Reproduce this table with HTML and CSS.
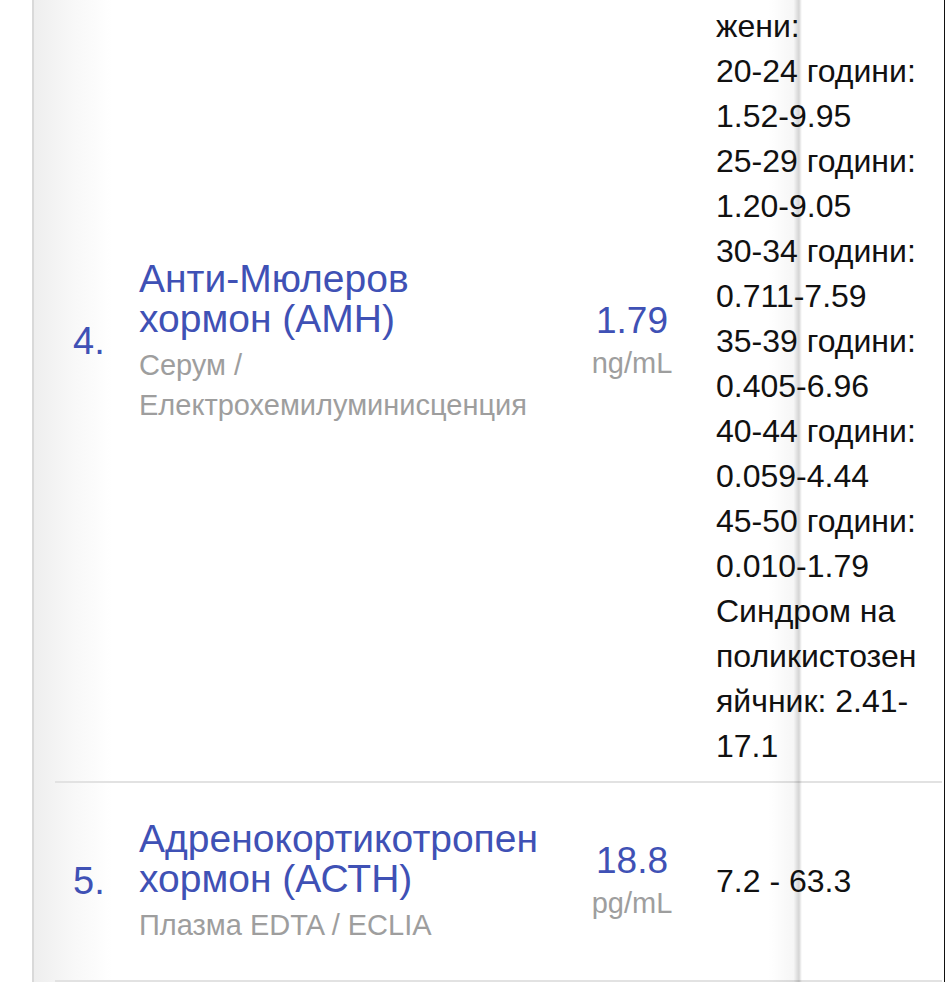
FILE: index.html
```html
<!DOCTYPE html>
<html>
<head lang="bg">
  <meta charset="UTF-8">
  <title>Резултати</title>
  <link rel="stylesheet" href="styles.css">
</head>
<body>
  <div class="page">
    <div class="panel">
      <div class="rows">
        <div class="row">
          <div class="num">4.</div>
          <div class="test">
            <div class="name">Анти-Мюлеров<br>хормон (АМН)</div>
            <div class="method">Серум / Електрохемилуминисценция</div>
          </div>
          <div class="result">
            <div class="value">1.79</div>
            <div class="unit">ng/mL</div>
          </div>
          <div class="range">
            Референтни<br>
            стойности за<br>
            жени:<br>
            20-24 години:<br>
            1.52-9.95<br>
            25-29 години:<br>
            1.20-9.05<br>
            30-34 години:<br>
            0.711-7.59<br>
            35-39 години:<br>
            0.405-6.96<br>
            40-44 години:<br>
            0.059-4.44<br>
            45-50 години:<br>
            0.010-1.79<br>
            Синдром на<br>
            поликистозен<br>
            яйчник: 2.41-<br>
            17.1
          </div>
        </div>
        <div class="row">
          <div class="num">5.</div>
          <div class="test">
            <div class="name">Адренокортикотропен хормон (АСТН)</div>
            <div class="method">Плазма EDTA / ECLIA</div>
          </div>
          <div class="result">
            <div class="value">18.8</div>
            <div class="unit">pg/mL</div>
          </div>
          <div class="range">7.2 - 63.3</div>
        </div>
      </div>
      <div class="fold"></div>
    </div>
  </div>
</body>
</html>
```

FILE: styles.css
```css
body {
  margin: 0;
  background: #fff;
  font-family: "Liberation Sans", Arial, sans-serif;
  height: 987px;
  overflow: hidden;
}
.page {
  padding-left: 32px;
  padding-right: 1px;
}
.panel {
  position: relative;
  min-height: 987px;
  border-left: 2px solid #d9d9d9;
  border-right: 1px solid #111;
  background: linear-gradient(to right, #eeeeee 0, #f8f8f8 40px, #fff 78px);
}
.rows {
  margin: -98px 2px 0 21px;
}
.row {
  display: grid;
  grid-template-columns: 66px 441px 104px 1fr;
  align-items: center;
  box-sizing: border-box;
  min-height: 199px;
  padding: 12px 0 12px 18px;
  border-bottom: 2px solid #e2e2e2;
}
.num {
  font-size: 38px;
  color: #3f51b5;
}
.name {
  font-size: 39px;
  line-height: 40px;
  color: #3f51b5;
}
.method {
  font-size: 29px;
  line-height: 40px;
  margin-top: 6px;
  color: #9e9e9e;
}
.result {
  text-align: center;
}
.value {
  font-size: 37px;
  line-height: 40px;
  color: #3f51b5;
}
.unit {
  font-size: 29px;
  line-height: 40px;
  margin-top: 2px;
  color: #9e9e9e;
}
.range {
  padding-left: 32px;
  font-size: 32px;
  line-height: 45px;
  color: #111;
}
.fold {
  position: absolute;
  top: 0;
  bottom: 0;
  left: 734px;
  width: 34px;
  pointer-events: none;
  background: linear-gradient(to right, rgba(0, 0, 0, 0) 0, rgba(0, 0, 0, 0.035) 75%, rgba(0, 0, 0, 0.17) 91%, rgba(0, 0, 0, 0.05) 97%, rgba(0, 0, 0, 0) 100%);
}
```
